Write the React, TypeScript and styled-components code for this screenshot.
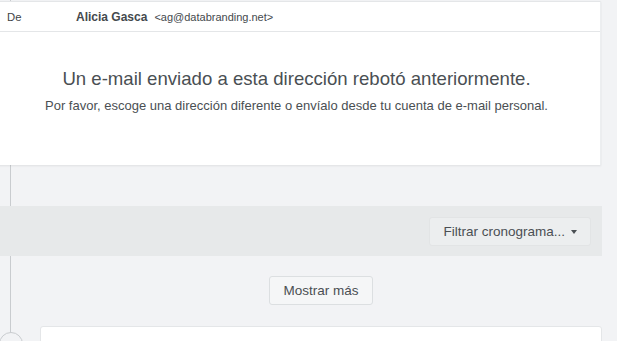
import styled, { createGlobalStyle } from "styled-components";

const GlobalStyle = createGlobalStyle`
  html, body {
    margin: 0;
    padding: 0;
    background: #f2f3f5;
    font-family: "Liberation Sans", Arial, sans-serif;
    overflow: hidden;
  }
`;

const Timeline = styled.div`
  position: relative;
  width: 602px;
  height: 341px;
  overflow: hidden;
  display: flex;
  flex-direction: column;
  & > * {
    flex-shrink: 0;
  }
  &::before {
    content: "";
    position: absolute;
    left: 10px;
    top: 0;
    bottom: 0;
    width: 1px;
    background: #c9cccf;
  }
`;

const Card = styled.div`
  position: relative;
  z-index: 1;
  width: 608px;
  margin: 1px 0 0 -7px;
  background: #fff;
  border-top: 1px solid #e4e6e8;
  border-right: 1px solid #eceef0;
  box-shadow: 0 1px 2px rgba(0, 0, 0, 0.08);
  box-sizing: border-box;
`;

const FromRow = styled.div`
  display: flex;
  align-items: center;
  height: 29px;
  border-bottom: 1px solid #e4e6e8;
  padding-left: 14px;
  font-size: 11.3px;
  color: #3f4448;
`;

const Label = styled.span`
  width: 69px;
`;

const Sender = styled.span`
  font-weight: bold;
  font-size: 12px;
  color: #44494d;
`;

const Address = styled.span`
  margin-left: 7px;
  font-size: 11px;
  color: #44494d;
`;

const Notice = styled.div`
  display: flex;
  flex-direction: column;
  align-items: center;
  padding: 36px 0 51px;
`;

const NoticeTitle = styled.div`
  font-size: 18.6px;
  color: #4a4f53;
  line-height: 22px;
`;

const NoticeText = styled.div`
  margin-top: 8px;
  font-size: 13px;
  color: #4a4f53;
  line-height: 16px;
`;

const FilterBar = styled.div`
  position: relative;
  z-index: 1;
  margin-top: 41px;
  height: 50px;
  background: #e7e9ea;
  display: flex;
  align-items: center;
  justify-content: flex-end;
  padding-right: 11px;
`;

const Button = styled.button<{ $flat?: boolean }>`
  font-family: "Liberation Sans", Arial, sans-serif;
  font-size: 13.5px;
  color: #4a4f53;
  height: 29px;
  padding: 0 13px;
  border-radius: 3px;
  background: ${(p) => (p.$flat ? "#eceeef" : "#f5f6f7")};
  border: 1px solid ${(p) => (p.$flat ? "#e2e4e5" : "#dcdfe1")};
  display: flex;
  align-items: center;
  gap: 6px;
  box-sizing: border-box;
`;

const Caret = styled.span`
  width: 0;
  height: 0;
  border-left: 3.5px solid transparent;
  border-right: 3.5px solid transparent;
  border-top: 4px solid #4a4f53;
  margin-top: 1px;
`;

const MoreRow = styled.div`
  display: flex;
  justify-content: center;
  padding-left: 40px;
  margin-top: 20px;
`;

const Entry = styled.div`
  display: flex;
  align-items: flex-start;
  margin-top: 21px;
`;

const Dot = styled.div`
  position: relative;
  z-index: 1;
  margin: 6px 0 0 -1px;
  width: 24px;
  height: 24px;
  border-radius: 50%;
  border: 1px solid #c9cccf;
  background: #f2f3f5;
  box-sizing: border-box;
`;

const EntryCard = styled.div`
  margin-left: 17px;
  flex: 1;
  height: 40px;
  background: #fff;
  border: 1px solid #e4e6e8;
  border-radius: 3px;
  box-sizing: border-box;
`;

export default function App() {
  return (
    <>
      <GlobalStyle />
      <Timeline>
        <Card>
          <FromRow>
            <Label>De</Label>
            <Sender>Alicia Gasca</Sender>
            <Address>&lt;ag@databranding.net&gt;</Address>
          </FromRow>
          <Notice>
            <NoticeTitle>Un e-mail enviado a esta dirección rebotó anteriormente.</NoticeTitle>
            <NoticeText>
              Por favor, escoge una dirección diferente o envíalo desde tu cuenta de e-mail personal.
            </NoticeText>
          </Notice>
        </Card>
        <FilterBar>
          <Button $flat>
            Filtrar cronograma...
            <Caret />
          </Button>
        </FilterBar>
        <MoreRow>
          <Button>Mostrar más</Button>
        </MoreRow>
        <Entry>
          <Dot />
          <EntryCard />
        </Entry>
      </Timeline>
    </>
  );
}
